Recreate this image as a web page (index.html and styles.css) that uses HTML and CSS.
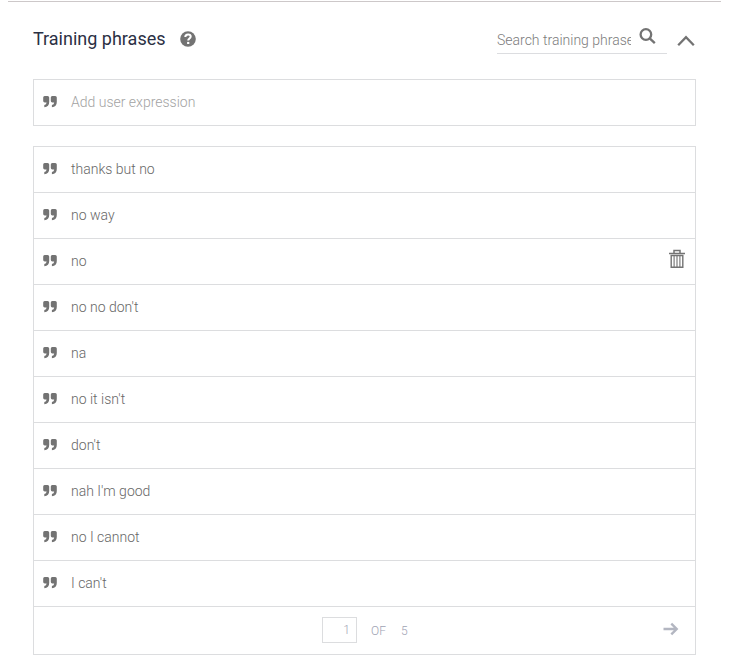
FILE: index.html
```
<!DOCTYPE html>
<html lang="en">
<head>
<meta charset="utf-8">
<title>Training phrases</title>
<link rel="stylesheet" href="styles.css">
</head>
<body>
<svg class="defs" width="0" height="0" aria-hidden="true">
  <symbol id="quote" viewBox="0 0 14 12">
    <path d="M1.6 0H4.6Q6.2 0 6.2 1.5V6Q6.2 11 1.3 11.2V9Q3.5 8.7 3.6 6.4H1.7Q0.2 6.4 0.2 5V1.5Q0.2 0 1.6 0ZM9.2 0H12.2Q13.8 0 13.8 1.5V6Q13.8 11 8.9 11.2V9Q11.1 8.7 11.2 6.4H9.3Q7.8 6.4 7.8 5V1.5Q7.8 0 9.2 0Z"/>
  </symbol>
</svg>
<main class="panel">
  <header class="head">
    <h1 class="title">Training phrases</h1>
    <svg class="help" width="16" height="16" viewBox="0 0 16 16"><circle cx="8" cy="8" r="7.8" fill="#737373"/><path d="M5.3 6.1C5.3 4.2 6.4 3.4 8.1 3.4C9.7 3.4 10.7 4.3 10.7 5.6C10.7 7.5 8.2 7.5 8.2 9.5" fill="none" stroke="#fff" stroke-width="2"/><rect x="7.1" y="10.9" width="2.2" height="2.1" fill="#fff"/></svg>
    <div class="search">
      <span class="search-text">Search training phrases</span>
      <svg class="search-icon" width="17" height="17" viewBox="0 0 17 17"><circle cx="6.9" cy="6.5" r="5.3"/><path d="M10.7 10.3L15.8 15.2"/></svg>
    </div>
    <svg class="collapse" width="18" height="12" viewBox="0 0 18 12"><path d="M1.2 10.3L9 2.2L16.8 10.3"/></svg>
  </header>

  <div class="row add"><svg class="quote"><use href="#quote"/></svg><span>Add user expression</span></div>

  <section class="list">
    <div class="row"><svg class="quote"><use href="#quote"/></svg><span>thanks but no</span></div>
    <div class="row"><svg class="quote"><use href="#quote"/></svg><span>no way</span></div>
    <div class="row"><svg class="quote"><use href="#quote"/></svg><span>no</span>
      <svg class="trash" width="16" height="20" viewBox="0 0 16 20"><path d="M0 4.5H16M5 4V1.5H11V4" stroke-width="1.5"/><path d="M2.2 6.5H13.8V18.3H2.2Z" stroke-width="1.4"/><path d="M5.1 7V18M8 7V18M10.9 7V18" stroke-width="1.1"/></svg>
    </div>
    <div class="row"><svg class="quote"><use href="#quote"/></svg><span>no no don't</span></div>
    <div class="row"><svg class="quote"><use href="#quote"/></svg><span>na</span></div>
    <div class="row"><svg class="quote"><use href="#quote"/></svg><span>no it isn't</span></div>
    <div class="row"><svg class="quote"><use href="#quote"/></svg><span>don't</span></div>
    <div class="row"><svg class="quote"><use href="#quote"/></svg><span>nah I'm good</span></div>
    <div class="row"><svg class="quote"><use href="#quote"/></svg><span>no I cannot</span></div>
    <div class="row"><svg class="quote"><use href="#quote"/></svg><span>I can't</span></div>
    <footer class="pager">
      <span class="page">1</span>
      <span class="of">OF</span>
      <span class="total">5</span>
      <svg class="next" width="16" height="14" viewBox="0 0 16 14"><path d="M.5 7H13.5M8.3 1.6L13.7 7L8.3 12.4"/></svg>
    </footer>
  </section>
</main>
</body>
</html>
```
FILE: styles.css
```
* { box-sizing: border-box; }
body {
  margin: 0;
  background: #fff;
  color: #676767;
  font: 300 14px/20px Roboto, sans-serif;
}
svg { display: block; flex: none; }
.defs { position: absolute; }
.panel {
  margin: 1px 11px 0 8px;
  padding: 0 25px;
  border-top: 1px solid #cdc8c9;
}
.head {
  display: flex;
  align-items: flex-start;
  height: 77px;
}
.title {
  margin: 25px 0 0;
  color: #2b3044;
  font-size: 18px;
  font-weight: 400;
  line-height: 24px;
}
.help { margin: 29px 0 0 14.5px; }
.search {
  display: flex;
  width: 170px;
  height: 33px;
  margin: 19px 10px 0 auto;
  border-bottom: 1px solid #dcdde0;
}
.search-text {
  width: 134px;
  margin-top: 9px;
  overflow: hidden;
  color: #7c7c7c;
  white-space: nowrap;
}
.search-icon {
  margin: 7px 0 0 8px;
  fill: none;
  stroke: #737373;
  stroke-width: 2.3;
}
.collapse {
  margin: 33px 1px 0 0;
  fill: none;
  stroke: #737373;
  stroke-width: 2.3;
}
.row {
  display: flex;
  align-items: center;
  height: 46px;
  padding: 0 9px 2px;
  border-bottom: 1px solid #dcdddf;
}
.row.add {
  height: 47px;
  margin-bottom: 20px;
  border: 1px solid #dcdddf;
  color: #a3a3a3;
}
.list {
  border: 1px solid #dcdddf;
}
.quote {
  width: 14px;
  height: 12px;
  margin-right: 14px;
  fill: #737373;
}
.trash {
  margin: -3px 1px 0 auto;
  fill: none;
  stroke: #737373;
}
.pager {
  display: flex;
  align-items: center;
  height: 47px;
  padding: 0 0 2px 288px;
  color: #a0a3b4;
  font-size: 12px;
}
.page {
  width: 35px;
  height: 26px;
  padding-right: 6px;
  border: 1px solid #dcdddf;
  line-height: 24px;
  text-align: right;
}
.of { margin: 2px 0 0 14px; }
.total { margin: 2px 0 0 15px; }
.next {
  margin: -2px 16px 0 auto;
  fill: none;
  stroke: #b3b6c1;
  stroke-width: 2.4;
}
```
